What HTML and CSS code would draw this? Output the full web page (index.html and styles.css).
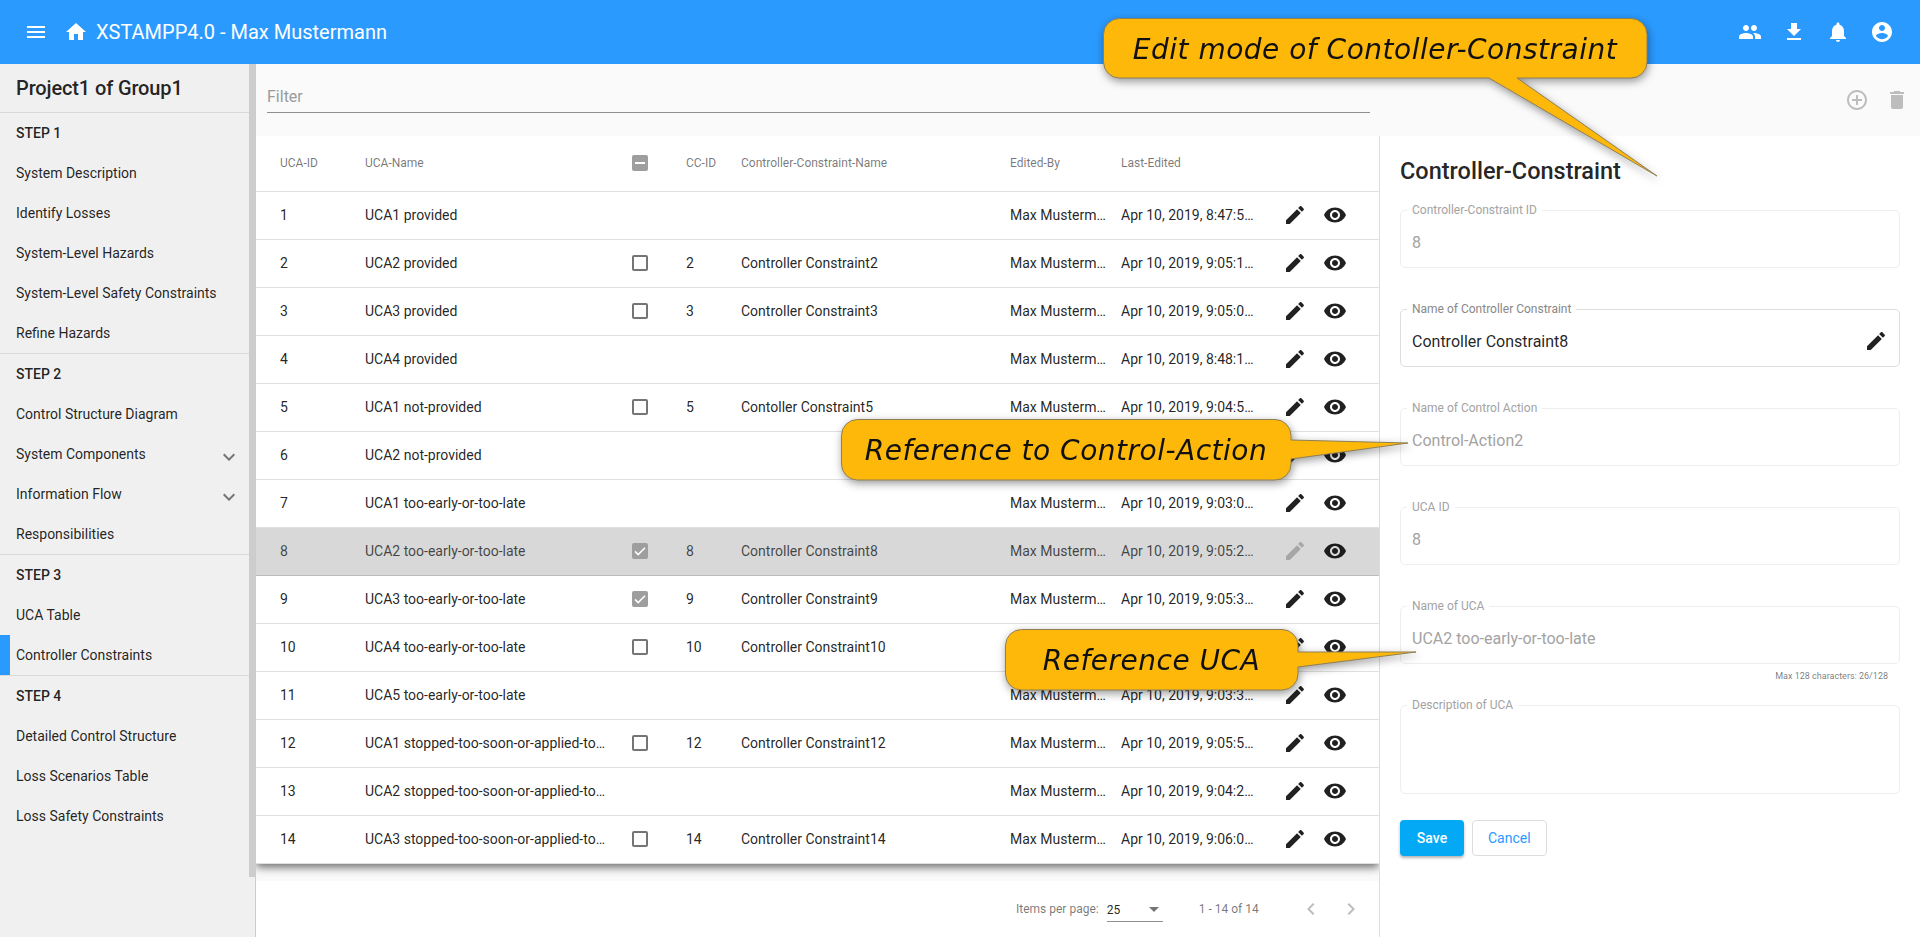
FILE: index.html
```html
<!DOCTYPE html>
<html lang="en">
<head>
  <meta charset="UTF-8">
  <title>XSTAMPP4.0</title>
  <link rel="stylesheet" href="styles.css">
</head>
<body>

<svg class="sprite" xmlns="http://www.w3.org/2000/svg">
  <symbol id="i-menu" viewBox="0 0 24 24"><path d="M3 18h18v-2H3v2zm0-5h18v-2H3v2zm0-7v2h18V6H3z"/></symbol>
  <symbol id="i-home" viewBox="0 0 24 24"><path d="M10 20v-6h4v6h5v-8h3L12 3 2 12h3v8z"/></symbol>
  <symbol id="i-people" viewBox="0 0 24 24"><path d="M16 11c1.66 0 2.99-1.34 2.99-3S17.66 5 16 5c-1.66 0-3 1.34-3 3s1.34 3 3 3zm-8 0c1.66 0 2.99-1.34 2.99-3S9.66 5 8 5C6.34 5 5 6.34 5 8s1.34 3 3 3zm0 2c-2.33 0-7 1.17-7 3.5V19h14v-2.5c0-2.33-4.67-3.5-7-3.5zm8 0c-.29 0-.62.02-.97.05 1.16.84 1.97 1.97 1.97 3.45V19h6v-2.5c0-2.33-4.67-3.5-7-3.5z"/></symbol>
  <symbol id="i-download" viewBox="0 0 24 24"><path d="M19 9h-4V3H9v6H5l7 7 7-7zM5 18v2h14v-2H5z"/></symbol>
  <symbol id="i-bell" viewBox="0 0 24 24"><path d="M12 22c1.1 0 2-.9 2-2h-4c0 1.1.89 2 2 2zm6-6v-5c0-3.07-1.64-5.64-4.5-6.32V4c0-.83-.67-1.5-1.5-1.5s-1.5.67-1.5 1.5v.68C7.63 5.36 6 7.92 6 11v5l-2 2v1h16v-1l-2-2z"/></symbol>
  <symbol id="i-account" viewBox="0 0 24 24"><path d="M12 2C6.48 2 2 6.48 2 12s4.48 10 10 10 10-4.48 10-10S17.52 2 12 2zm0 3c1.66 0 3 1.34 3 3s-1.34 3-3 3-3-1.34-3-3 1.34-3 3-3zm0 14.2c-2.5 0-4.71-1.28-6-3.22.03-1.99 4-3.08 6-3.08 1.99 0 5.97 1.09 6 3.08-1.29 1.94-3.5 3.22-6 3.22z"/></symbol>
  <symbol id="i-add" viewBox="0 0 24 24"><path d="M13 7h-2v4H7v2h4v4h2v-4h4v-2h-4V7zm-1-5C6.48 2 2 6.48 2 12s4.48 10 10 10 10-4.48 10-10S17.52 2 12 2zm0 18c-4.41 0-8-3.59-8-8s3.59-8 8-8 8 3.59 8 8-3.59 8-8 8z"/></symbol>
  <symbol id="i-delete" viewBox="0 0 24 24"><path d="M6 19c0 1.1.9 2 2 2h8c1.1 0 2-.9 2-2V7H6v12zM19 4h-3.5l-1-1h-5l-1 1H5v2h14V4z"/></symbol>
  <symbol id="i-edit" viewBox="0 0 24 24"><path d="M3 17.25V21h3.75L17.81 9.94l-3.75-3.75L3 17.25zM20.71 7.04c.39-.39.39-1.02 0-1.41l-2.34-2.34c-.39-.39-1.02-.39-1.41 0l-1.83 1.83 3.75 3.75 1.83-1.83z"/></symbol>
  <symbol id="i-eye" viewBox="0 0 24 24"><path d="M12 4.5C7 4.5 2.73 7.61 1 12c1.73 4.39 6 7.5 11 7.5s9.27-3.11 11-7.5c-1.73-4.39-6-7.5-11-7.5zM12 17c-2.76 0-5-2.24-5-5s2.24-5 5-5 5 2.24 5 5-2.24 5-5 5zm0-8c-1.66 0-3 1.34-3 3s1.34 3 3 3 3-1.34 3-3-1.34-3-3-3z"/></symbol>
  <symbol id="i-expand" viewBox="0 0 24 24"><path d="M16.59 8.59L12 13.17 7.41 8.59 6 10l6 6 6-6z"/></symbol>
  <symbol id="i-left" viewBox="0 0 24 24"><path d="M15.41 7.41L14 6l-6 6 6 6 1.41-1.41L10.83 12z"/></symbol>
  <symbol id="i-right" viewBox="0 0 24 24"><path d="M10 6L8.59 7.41 13.17 12l-4.58 4.59L10 18l6-6z"/></symbol>
  <symbol id="i-check" viewBox="0 0 16 16"><path d="M3 8.4l3.2 3.2L13 4.8" fill="none" stroke="#fff" stroke-width="1.5"/></symbol>
</svg>

<header class="toolbar">
  <svg class="icon"><use href="#i-menu"/></svg>
  <svg class="icon home"><use href="#i-home"/></svg>
  <span class="app-title">XSTAMPP4.0 - Max Mustermann</span>
  <div class="toolbar-actions">
    <svg class="icon"><use href="#i-people"/></svg>
    <svg class="icon"><use href="#i-download"/></svg>
    <svg class="icon"><use href="#i-bell"/></svg>
    <svg class="icon"><use href="#i-account"/></svg>
  </div>
</header>

<div class="layout">
  <aside class="sidebar">
    <nav class="nav">
      <div class="project">Project1 of Group1</div>
      <section class="step">
        <div class="step-title">STEP 1</div>
        <a class="nav-item">System Description</a>
        <a class="nav-item">Identify Losses</a>
        <a class="nav-item">System-Level Hazards</a>
        <a class="nav-item">System-Level Safety Constraints</a>
        <a class="nav-item">Refine Hazards</a>
      </section>
      <section class="step">
        <div class="step-title">STEP 2</div>
        <a class="nav-item">Control Structure Diagram</a>
        <a class="nav-item">System Components <svg class="icon chevron"><use href="#i-expand"/></svg></a>
        <a class="nav-item">Information Flow <svg class="icon chevron"><use href="#i-expand"/></svg></a>
        <a class="nav-item">Responsibilities</a>
      </section>
      <section class="step">
        <div class="step-title">STEP 3</div>
        <a class="nav-item">UCA Table</a>
        <a class="nav-item active">Controller Constraints</a>
      </section>
      <section class="step last">
        <div class="step-title">STEP 4</div>
        <a class="nav-item">Detailed Control Structure</a>
        <a class="nav-item">Loss Scenarios Table</a>
        <a class="nav-item">Loss Safety Constraints</a>
      </section>
    </nav>
    <div class="scroll-thumb"></div>
  </aside>

  <main class="main">
    <div class="filter-bar">
      <div class="filter-field">Filter</div>
      <div class="filter-actions">
        <svg class="icon"><use href="#i-add"/></svg>
        <svg class="icon"><use href="#i-delete"/></svg>
      </div>
    </div>

    <div class="content">
      <div class="table-area">
        <div class="table-clip">
          <div class="table">
            <div class="row head">
              <span>UCA-ID</span><span>UCA-Name</span>
              <span><i class="box indeterminate"></i></span>
              <span>CC-ID</span><span>Controller-Constraint-Name</span>
              <span>Edited-By</span><span>Last-Edited</span>
            </div>

            <div class="row">
              <span>1</span><span class="c-name">UCA1 provided</span><span></span><span></span><span></span>
              <span class="c-by">Max Mustermann</span><span class="c-date">Apr 10, 2019, 8:47:52 AM</span>
              <svg class="icon"><use href="#i-edit"/></svg><svg class="icon"><use href="#i-eye"/></svg>
            </div>
            <div class="row">
              <span>2</span><span class="c-name">UCA2 provided</span><span><i class="box"></i></span><span>2</span><span>Controller Constraint2</span>
              <span class="c-by">Max Mustermann</span><span class="c-date">Apr 10, 2019, 9:05:14 AM</span>
              <svg class="icon"><use href="#i-edit"/></svg><svg class="icon"><use href="#i-eye"/></svg>
            </div>
            <div class="row">
              <span>3</span><span class="c-name">UCA3 provided</span><span><i class="box"></i></span><span>3</span><span>Controller Constraint3</span>
              <span class="c-by">Max Mustermann</span><span class="c-date">Apr 10, 2019, 9:05:04 AM</span>
              <svg class="icon"><use href="#i-edit"/></svg><svg class="icon"><use href="#i-eye"/></svg>
            </div>
            <div class="row">
              <span>4</span><span class="c-name">UCA4 provided</span><span></span><span></span><span></span>
              <span class="c-by">Max Mustermann</span><span class="c-date">Apr 10, 2019, 8:48:12 AM</span>
              <svg class="icon"><use href="#i-edit"/></svg><svg class="icon"><use href="#i-eye"/></svg>
            </div>
            <div class="row">
              <span>5</span><span class="c-name">UCA1 not-provided</span><span><i class="box"></i></span><span>5</span><span>Contoller Constraint5</span>
              <span class="c-by">Max Mustermann</span><span class="c-date">Apr 10, 2019, 9:04:53 AM</span>
              <svg class="icon"><use href="#i-edit"/></svg><svg class="icon"><use href="#i-eye"/></svg>
            </div>
            <div class="row">
              <span>6</span><span class="c-name">UCA2 not-provided</span><span></span><span></span><span></span>
              <span class="c-by">Max Mustermann</span><span class="c-date">Apr 10, 2019, 9:02:41 AM</span>
              <svg class="icon"><use href="#i-edit"/></svg><svg class="icon"><use href="#i-eye"/></svg>
            </div>
            <div class="row">
              <span>7</span><span class="c-name">UCA1 too-early-or-too-late</span><span></span><span></span><span></span>
              <span class="c-by">Max Mustermann</span><span class="c-date">Apr 10, 2019, 9:03:06 AM</span>
              <svg class="icon"><use href="#i-edit"/></svg><svg class="icon"><use href="#i-eye"/></svg>
            </div>
            <div class="row selected">
              <span>8</span><span class="c-name">UCA2 too-early-or-too-late</span><span><i class="box checked"><svg><use href="#i-check"/></svg></i></span><span>8</span><span>Controller Constraint8</span>
              <span class="c-by">Max Mustermann</span><span class="c-date">Apr 10, 2019, 9:05:25 AM</span>
              <svg class="icon muted"><use href="#i-edit"/></svg><svg class="icon"><use href="#i-eye"/></svg>
            </div>
            <div class="row">
              <span>9</span><span class="c-name">UCA3 too-early-or-too-late</span><span><i class="box checked"><svg><use href="#i-check"/></svg></i></span><span>9</span><span>Controller Constraint9</span>
              <span class="c-by">Max Mustermann</span><span class="c-date">Apr 10, 2019, 9:05:37 AM</span>
              <svg class="icon"><use href="#i-edit"/></svg><svg class="icon"><use href="#i-eye"/></svg>
            </div>
            <div class="row">
              <span>10</span><span class="c-name">UCA4 too-early-or-too-late</span><span><i class="box"></i></span><span>10</span><span>Controller Constraint10</span>
              <span class="c-by">Max Mustermann</span><span class="c-date">Apr 10, 2019, 9:05:44 AM</span>
              <svg class="icon"><use href="#i-edit"/></svg><svg class="icon"><use href="#i-eye"/></svg>
            </div>
            <div class="row">
              <span>11</span><span class="c-name">UCA5 too-early-or-too-late</span><span></span><span></span><span></span>
              <span class="c-by">Max Mustermann</span><span class="c-date">Apr 10, 2019, 9:03:31 AM</span>
              <svg class="icon"><use href="#i-edit"/></svg><svg class="icon"><use href="#i-eye"/></svg>
            </div>
            <div class="row">
              <span>12</span><span class="c-name">UCA1 stopped-too-soon-or-applied-too-long</span><span><i class="box"></i></span><span>12</span><span>Controller Constraint12</span>
              <span class="c-by">Max Mustermann</span><span class="c-date">Apr 10, 2019, 9:05:52 AM</span>
              <svg class="icon"><use href="#i-edit"/></svg><svg class="icon"><use href="#i-eye"/></svg>
            </div>
            <div class="row">
              <span>13</span><span class="c-name">UCA2 stopped-too-soon-or-applied-too-long</span><span></span><span></span><span></span>
              <span class="c-by">Max Mustermann</span><span class="c-date">Apr 10, 2019, 9:04:28 AM</span>
              <svg class="icon"><use href="#i-edit"/></svg><svg class="icon"><use href="#i-eye"/></svg>
            </div>
            <div class="row">
              <span>14</span><span class="c-name">UCA3 stopped-too-soon-or-applied-too-long</span><span><i class="box"></i></span><span>14</span><span>Controller Constraint14</span>
              <span class="c-by">Max Mustermann</span><span class="c-date">Apr 10, 2019, 9:06:03 AM</span>
              <svg class="icon"><use href="#i-edit"/></svg><svg class="icon"><use href="#i-eye"/></svg>
            </div>
          </div>
        </div>

        <div class="paginator">
          <span class="per-page">Items per page:</span>
          <span class="page-select">25<i class="caret"></i></span>
          <span class="range">1 - 14 of 14</span>
          <svg class="icon"><use href="#i-left"/></svg>
          <svg class="icon"><use href="#i-right"/></svg>
        </div>
      </div>

      <form class="panel">
        <h2>Controller-Constraint</h2>

        <fieldset class="field">
          <legend>Controller-Constraint ID</legend>
          <div class="field-body">8</div>
        </fieldset>

        <fieldset class="field editable">
          <legend>Name of Controller Constraint</legend>
          <div class="field-body">Controller Constraint8 <svg class="icon"><use href="#i-edit"/></svg></div>
        </fieldset>

        <fieldset class="field">
          <legend>Name of Control Action</legend>
          <div class="field-body">Control-Action2</div>
        </fieldset>

        <fieldset class="field">
          <legend>UCA ID</legend>
          <div class="field-body">8</div>
        </fieldset>

        <fieldset class="field no-gap">
          <legend>Name of UCA</legend>
          <div class="field-body">UCA2 too-early-or-too-late</div>
        </fieldset>
        <div class="hint">Max 128 characters: 26/128</div>

        <fieldset class="field tall">
          <legend>Description of UCA</legend>
        </fieldset>

        <div class="buttons">
          <button type="button" class="btn-save">Save</button>
          <button type="button" class="btn-cancel">Cancel</button>
        </div>
      </form>
    </div>
  </main>
</div>

<!-- annotations drawn on top of the screenshot -->
<div class="callout callout-edit">
  <svg width="556" height="160"><path d="M16.5 .5H528a16 16 0 0 1 16 16V44a16 16 0 0 1-16 16H414L554 158 386 60H16.5a16 16 0 0 1-16-16V16.5a16 16 0 0 1 16-16z"/></svg>
  <span>Edit mode of Contoller-Constraint</span>
</div>
<div class="callout callout-action">
  <svg width="569" height="64"><path d="M16.5 .5H434a16 16 0 0 1 16 16V21L567 24 450 40V45a16 16 0 0 1-16 16H16.5a16 16 0 0 1-16-16V16.5a16 16 0 0 1 16-16z"/></svg>
  <span>Reference to Control-Action</span>
</div>
<div class="callout callout-uca">
  <svg width="413" height="64"><path d="M16.5 .5H277a16 16 0 0 1 16 16V23L411 23 293 38V45a16 16 0 0 1-16 16H16.5a16 16 0 0 1-16-16V16.5a16 16 0 0 1 16-16z"/></svg>
  <span>Reference UCA</span>
</div>

</body>
</html>
```

FILE: styles.css
```css
* { box-sizing: border-box; }
html, body { height: 100%; }
body {
  margin: 0;
  overflow: hidden;
  display: flex;
  flex-direction: column;
  font-family: Roboto, sans-serif;
  font-size: 14px;
  color: rgba(0,0,0,0.87);
  background: white;
}
.sprite { display: none; }
.icon {
  width: 24px;
  height: 24px;
  flex: none;
  fill: currentColor;
}

/* top bar */
.toolbar {
  height: 64px;
  flex: none;
  display: flex;
  align-items: center;
  padding: 0 26px 0 24px;
  background: #2b9aff;
  color: white;
}
.home { margin-left: 16px; }
.app-title {
  margin-left: 8px;
  font-size: 20px;
  font-weight: 400;
}
.toolbar-actions {
  margin-left: auto;
  display: flex;
  gap: 20px;
}

.layout {
  flex: 1;
  display: flex;
  min-height: 0;
}

/* left nav */
.sidebar {
  width: 256px;
  flex: none;
  display: flex;
  align-items: flex-start;
  background: #f0f0f0;
  border-right: 1px solid #ccc;
}
.nav { width: 249px; flex: none; }
.scroll-thumb {
  width: 6px;
  height: 813px;
  background: #cdcdcd;
}
.project {
  height: 49px;
  padding: 11px 16px 0;
  font-size: 20px;
  font-weight: 500;
  letter-spacing: -0.13px;
  line-height: 26px;
  border-bottom: 1px solid #d9d9d9;
}
.step { border-bottom: 1px solid #d9d9d9; }
.step.last { border-bottom: none; }
.step-title {
  height: 40px;
  line-height: 40px;
  padding-left: 16px;
  font-weight: 500;
}
.nav-item {
  height: 40px;
  display: flex;
  align-items: center;
  justify-content: space-between;
  padding: 0 8px 0 16px;
}
.nav-item.active { box-shadow: inset 10px 0 0 #2b9aff; }
.chevron {
  margin-top: 6px;
  color: #757575;
}

/* filter */
.main {
  flex: 1;
  min-width: 0;
  display: flex;
  flex-direction: column;
}
.filter-bar {
  height: 72px;
  flex: none;
  display: flex;
  align-items: flex-start;
  padding: 0 11px;
  background: #fafafa;
}
.filter-field {
  width: 1103px;
  height: 49px;
  padding-top: 23px;
  line-height: 20px;
  font-size: 16px;
  color: #9a9a9a;
  border-bottom: 1px solid #8f8f8f;
}
.filter-actions {
  margin: 24px 0 0 auto;
  display: flex;
  gap: 16px;
  color: #bdbdbd;
}

.content {
  flex: 1;
  display: flex;
  min-height: 0;
}

/* table */
.table-area {
  width: 1124px;
  flex: none;
  border-right: 1px solid #ddd;
}
.table-clip {
  height: 745px;
  overflow: hidden;
  background: #fafafa;
}
.table {
  background: white;
  box-shadow: 0 3px 9px rgba(0,0,0,0.6);
}
.row {
  height: 48px;
  display: grid;
  grid-template-columns: 85px 267px 54px 55px 269px 111px 162px 40px 24px;
  align-items: center;
  padding: 0 0 1px 24px;
  border-bottom: 1px solid #e0e0e0;
}
.row.head {
  height: 56px;
  font-size: 12px;
  color: rgba(0,0,0,0.54);
}
.row span {
  white-space: nowrap;
  overflow: hidden;
  text-overflow: ellipsis;
}
.row .c-name { padding-right: 26px; }
.row .c-by { padding-right: 15px; }
.row .c-date { padding-right: 26px; }
.row.selected {
  background: #d8d8d8;
  color: rgba(0,0,0,0.7);
  border-bottom-color: #bbb;
}
.row.selected .icon { color: rgba(0,0,0,0.87); }
.row.selected .icon.muted { color: #a6a6a6; }
.box {
  display: block;
  width: 16px;
  height: 16px;
  border: 2px solid #757575;
  border-radius: 2px;
}
.box.indeterminate, .box.checked {
  position: relative;
  border: none;
  background: #9e9e9e;
}
.box.indeterminate::after {
  content: "";
  position: absolute;
  left: 3px;
  top: 7px;
  width: 10px;
  height: 2px;
  background: white;
}
.box.checked svg { display: block; width: 16px; height: 16px; }

/* paginator */
.paginator {
  height: 56px;
  display: flex;
  align-items: center;
  padding-left: 760px;
  font-size: 12px;
  color: rgba(0,0,0,0.54);
}
.page-select {
  width: 56px;
  height: 23px;
  margin-left: 8px;
  display: flex;
  align-items: center;
  justify-content: space-between;
  padding-right: 4px;
  color: rgba(0,0,0,0.87);
  border-bottom: 1px solid #8f8f8f;
  position: relative;
  top: 1px;
}
.caret {
  border-left: 5px solid transparent;
  border-right: 5px solid transparent;
  border-top: 5px solid #757575;
}
.range { margin: 0 40px 0 36px; }
.paginator .icon { color: #bdbdbd; margin-right: 16px; }

/* edit form */
.panel {
  flex: 1;
  padding: 21px 20px 0;
}
.panel h2 {
  margin: 0 0 18px;
  font-size: 23.5px;
  font-weight: 500;
  line-height: 28px;
}
.field {
  height: 65px;
  margin: 0 0 34px;
  padding: 0 11px;
  border: 1px solid #eee;
  border-radius: 5px;
  color: #a3a3a3;
}
.field legend {
  margin-left: -5px;
  padding: 0 5px;
  font-size: 12px;
  line-height: 14px;
}
.field-body {
  height: 50px;
  display: flex;
  align-items: center;
  justify-content: space-between;
  font-size: 16px;
}
.field.editable {
  border-color: #ddd;
  color: rgba(0,0,0,0.87);
}
.field.editable legend { color: #888; }
.field.no-gap { margin-bottom: 0; }
.field.tall { height: 96px; margin-bottom: 26px; }
.hint {
  height: 34px;
  padding: 5px 12px 0 0;
  text-align: right;
  font-size: 9px;
  line-height: 14px;
  color: rgba(0,0,0,0.54);
}
.buttons { display: flex; gap: 8px; }
.buttons button {
  height: 36px;
  min-width: 64px;
  padding: 0 15px;
  border-radius: 4px;
  font-family: inherit;
  font-size: 14px;
  font-weight: 500;
}
.btn-save {
  border: none;
  background: #03a9f4;
  color: white;
  box-shadow: 0 2px 3px rgba(0,0,0,0.3);
}
.btn-cancel {
  background: white;
  border: 1px solid #ddd;
  color: #2b9aff;
  font-weight: 400 !important;
}

/* yellow annotations */
.callout {
  position: absolute;
  filter: drop-shadow(1px 3px 4px rgba(0,0,0,0.4));
}
.callout svg { display: block; }
.callout path {
  fill: #feb80a;
  stroke: #8f7f55;
  stroke-width: 1;
}
.callout span {
  position: absolute;
  top: 0;
  left: 0;
  display: flex;
  align-items: center;
  justify-content: center;
  height: 61px;
  padding-top: 2px;
  font-family: "DejaVu Sans", sans-serif;
  font-style: italic;
  font-size: 28px;
  letter-spacing: 0.5px;
  white-space: nowrap;
  color: #111;
}
.callout-edit { left: 1103px; top: 18px; }
.callout-edit span { width: 544px; }
.callout-action { left: 841px; top: 419px; }
.callout-action span { width: 450px; }
.callout-uca { left: 1005px; top: 629px; }
.callout-uca span { width: 293px; }
```
